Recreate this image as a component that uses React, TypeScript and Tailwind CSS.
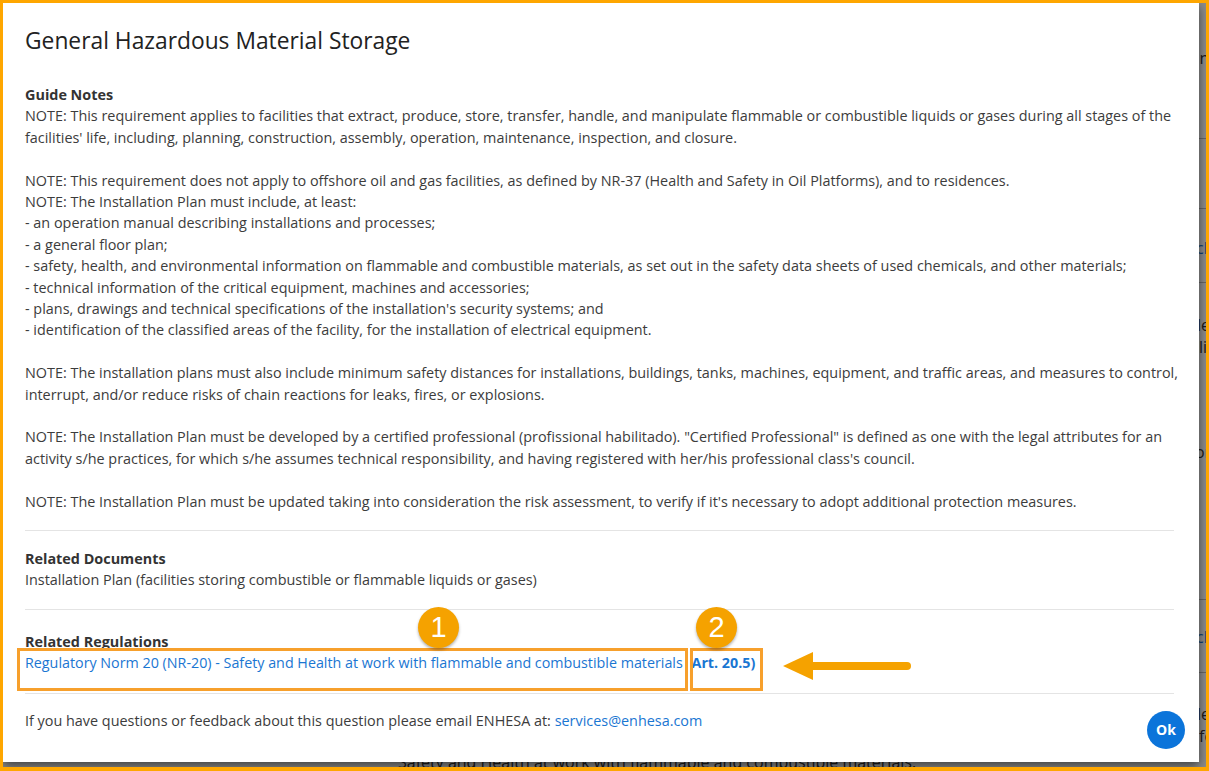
import React from 'react';

// ─── Requirement detail dialog ────────────────────────────────────────────────
// Modal over a dimmed requirements list, with call-out markers on the
// related-regulation link.

const ORANGE = '#fea600';

const guideNotes: string[] = [
  "NOTE: This requirement applies to facilities that extract, produce, store, transfer, handle, and manipulate flammable or combustible liquids or gases during all stages of the facilities' life, including, planning, construction, assembly, operation, maintenance, inspection, and closure.",
  '',
  'NOTE: This requirement does not apply to offshore oil and gas facilities, as defined by NR-37 (Health and Safety in Oil Platforms), and to residences.',
  'NOTE: The Installation Plan must include, at least:',
  '- an operation manual describing installations and processes;',
  '- a general floor plan;',
  '- safety, health, and environmental information on flammable and combustible materials, as set out in the safety data sheets of used chemicals, and other materials;',
  '- technical information of the critical equipment, machines and accessories;',
  "- plans, drawings and technical specifications of the installation's security systems; and",
  '- identification of the classified areas of the facility, for the installation of electrical equipment.',
  '',
  'NOTE: The installation plans must also include minimum safety distances for installations, buildings, tanks, machines, equipment, and traffic areas, and measures to control, interrupt, and/or reduce risks of chain reactions for leaks, fires, or explosions.',
  '',
  'NOTE: The Installation Plan must be developed by a certified professional (profissional habilitado). "Certified Professional" is defined as one with the legal attributes for an activity s/he practices, for which s/he assumes technical responsibility, and having registered with her/his professional class\'s council.',
  '',
  "NOTE: The Installation Plan must be updated taking into consideration the risk assessment, to verify if it's necessary to adopt additional protection measures.",
];

// The list page that sits behind the dialog
function BackgroundPage() {
  return (
    <div className="flex flex-col text-[16px] leading-[22px] text-[#333] whitespace-nowrap">
      <div className="h-[44px]" />
      <div className="h-[22px] pl-[1192px]">Information</div>
      <div className="h-[69px]" />
      <div className="h-px bg-[#bbb]" />
      <div className="h-[69px]" />
      <div className="h-px bg-[#bbb]" />
      <div className="h-[28px]" />
      <div className="h-[22px] pl-[1193px] text-[#1a76d2]">check</div>
      <div className="h-[23px]" />
      <div className="h-px bg-[#bbb]" />
      <div className="h-[31px]" />
      <div className="h-[22px] pl-[1194px]">level</div>
      <div className="h-[22px] pl-[1196px]">list</div>
      <div className="h-[83px]" />
      <div className="h-[22px] pl-[1192px]">order</div>
      <div className="h-[136px]" />
      <div className="h-px bg-[#bbb]" />
      <div className="h-[26px]" />
      <div className="h-[22px] pl-[1193px] text-[#1a76d2]">check</div>
      <div className="h-[24px]" />
      <div className="h-px bg-[#bbb]" />
      <div className="h-[30px]" />
      <div className="h-[22px] pl-[1194px]">level</div>
      <div className="h-[22px] pl-[1196px]">for</div>
      <div className="h-[4px]" />
      <div className="h-[22px] pl-[395px]">Safety and Health at work with flammable and combustible materials.</div>
    </div>
  );
}

function Divider({ className }: { className: string }) {
  return <div className={`h-px bg-[#e4e4e4] ${className}`} />;
}

function Marker({ n, className }: { n: number; className: string }) {
  return (
    <div
      className={`absolute flex items-center justify-center rounded-full bg-[#f5a200] text-white font-['Liberation_Sans',sans-serif] text-[29px] leading-none shadow-[0_2px_3px_rgba(0,0,0,0.3)] ${className}`}
    >
      {n}
    </div>
  );
}

function Dialog() {
  return (
    <div className="absolute left-0 top-0 flex h-[759px] w-[1196px] flex-col bg-white pl-[22px] pr-[25px] pt-[23px] shadow-[0_4px_10px_rgba(0,0,0,0.55)]">
      <h1 className="text-[22.8px] leading-[30px] text-[#222]">General Hazardous Material Storage</h1>

      {/* notes run a few px past the divider edge so long lines keep their breaks */}
      <div className="-mr-[6px] mt-[28px] text-[14.4px] leading-[21.4px] text-[#3c3c3c]">
        <div className="font-bold text-[#333]">Guide Notes</div>
        {guideNotes.map((line, i) =>
          line ? <p key={i}>{line}</p> : <div key={i} className="h-[21.4px]" />
        )}
      </div>

      <Divider className="mt-[18px]" />

      <div className="mt-[17px] text-[14.4px] leading-[21.4px] text-[#3c3c3c]">
        <div className="font-bold text-[#333]">Related Documents</div>
        <p>Installation Plan (facilities storing combustible or flammable liquids or gases)</p>
      </div>

      <Divider className="mt-[18px]" />

      <div className="mt-[21px] text-[14.4px] leading-[21.4px] text-[#3c3c3c]">
        <div className="font-bold text-[#333]">Related Regulations</div>
        <p className="text-[14.3px] text-[#1a76d2]">
          Regulatory Norm 20 (NR-20) - Safety and Health at work with flammable and combustible materials{' '}
          <span className="ml-[5px] font-bold">Art. 20.5)</span>
        </p>
      </div>

      <Divider className="mt-[19px]" />

      <div className="mt-[16px] flex items-start justify-between text-[14.4px] leading-[21.4px] text-[#3c3c3c]">
        <p>
          If you have questions or feedback about this question please email ENHESA at:{' '}
          <span className="text-[#1a76d2]">services@enhesa.com</span>
        </p>
        <button className="-mr-[11px] mt-[1px] flex h-[38px] w-[38px] items-center justify-center rounded-full bg-[#0b74da] text-[14px] font-bold text-white">
          Ok
        </button>
      </div>

      {/* call-outs */}
      <div className="absolute left-[14px] top-[645px] h-[43px] w-[671px] border-[3px] border-[#f7a02c]" />
      <div className="absolute left-[687px] top-[645px] h-[43px] w-[73px] border-[3px] border-[#f7a02c]" />
      <Marker n={1} className="left-[415px] top-[604px] h-[41px] w-[41px]" />
      <Marker n={2} className="left-[693px] top-[604px] h-[41px] w-[41px]" />
      <svg className="absolute left-[778px] top-[648px]" width="136" height="32" viewBox="0 0 136 32">
        <line x1="30" y1="15" x2="126" y2="15" stroke="#f5a200" strokeWidth="8" strokeLinecap="round" />
        <polygon points="2,15 32,1 32,29" fill="#f5a200" />
      </svg>
    </div>
  );
}

export default function App() {
  return (
    <div
      className="h-[771px] w-[1209px] pb-[4px] pl-[3px] pr-[3px] pt-[3px] font-['Open_Sans',sans-serif]"
      style={{ backgroundColor: ORANGE }}
    >
      <div className="relative h-[764px] w-[1203px] overflow-hidden bg-white">
        <BackgroundPage />
        <div className="absolute inset-0 bg-black/45" />
        <Dialog />
      </div>
    </div>
  );
}
